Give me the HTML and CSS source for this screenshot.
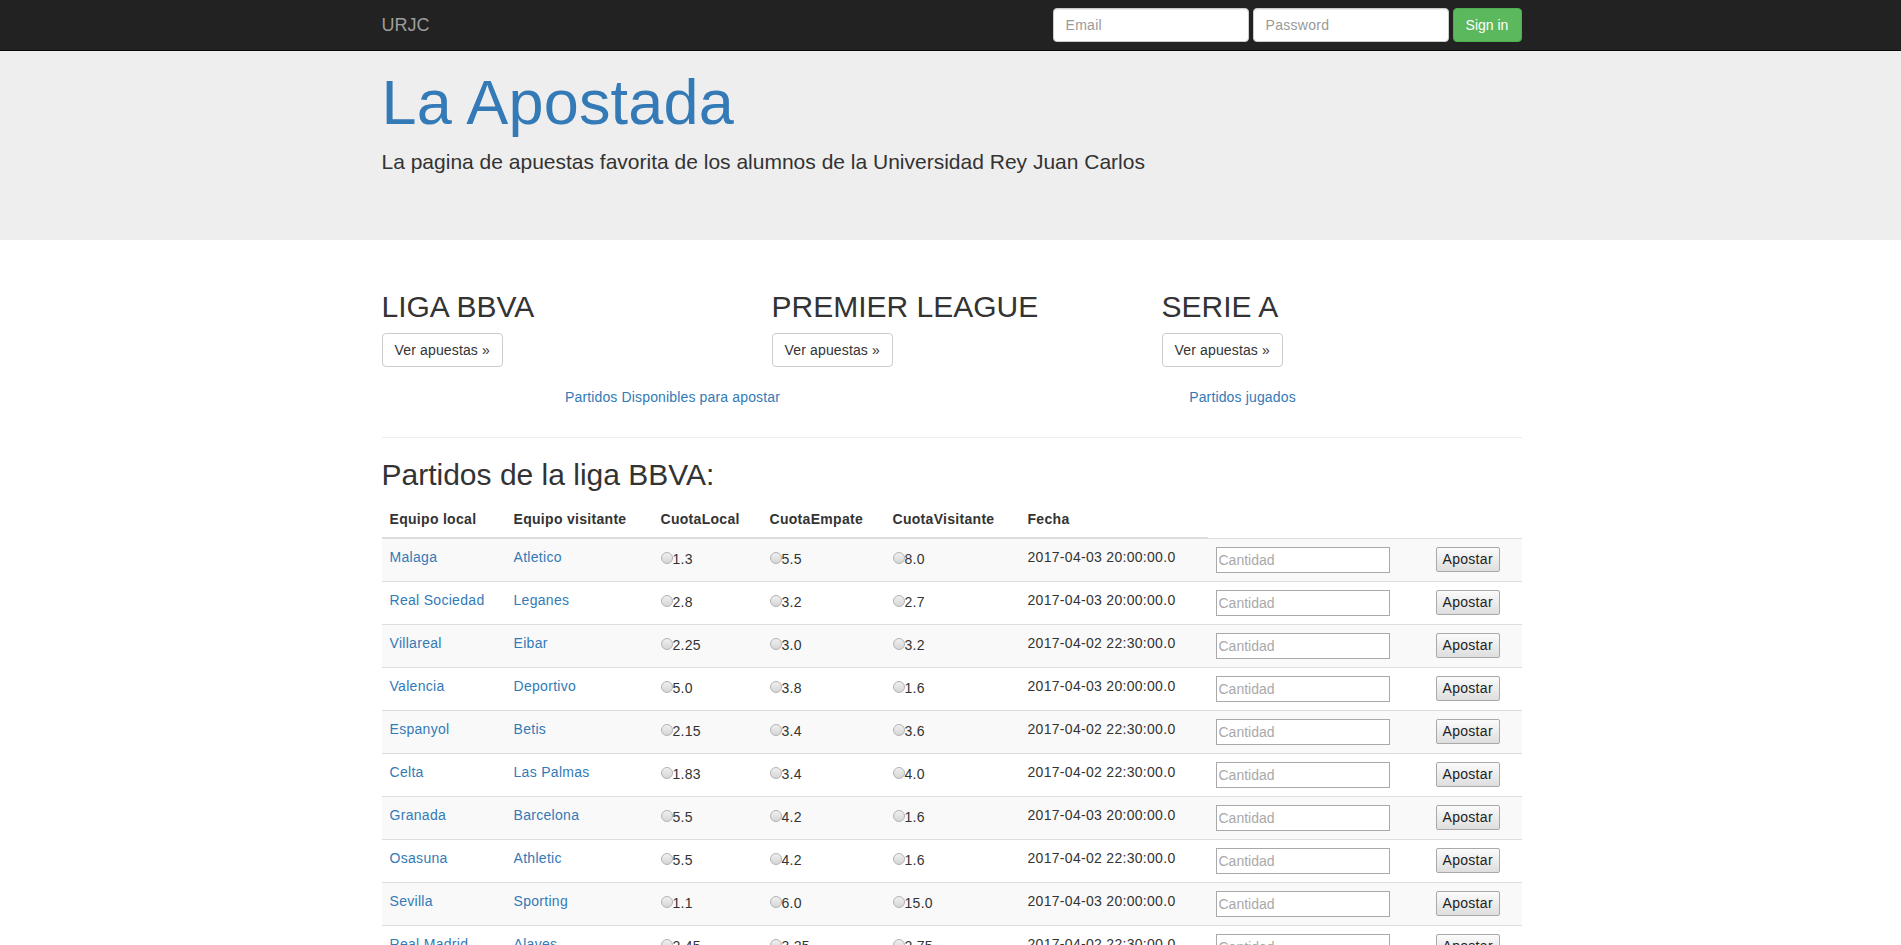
FILE: index.html
```html
<!DOCTYPE html>
<html lang="es">
<head>
<meta charset="utf-8">
<title>La Apostada</title>
<link rel="stylesheet" href="styles.css">
</head>
<body>
<nav class="navbar">
  <div class="container navbar-inner">
    <a class="brand" href="#">URJC</a>
    <form class="navbar-form">
      <input class="form-control" type="text" placeholder="Email">
      <input class="form-control" type="password" placeholder="Password">
      <button class="btn btn-success" type="button">Sign in</button>
    </form>
  </div>
</nav>

<div class="jumbotron">
  <div class="container">
    <h1>La Apostada</h1>
    <p>La pagina de apuestas favorita de los alumnos de la Universidad Rey Juan Carlos</p>
  </div>
</div>

<div class="container">
  <div class="leagues">
    <div class="league">
      <h2>LIGA BBVA</h2>
      <p><a class="btn btn-default" href="#">Ver apuestas &raquo;</a></p>
    </div>
    <div class="league">
      <h2>PREMIER LEAGUE</h2>
      <p><a class="btn btn-default" href="#">Ver apuestas &raquo;</a></p>
    </div>
    <div class="league">
      <h2>SERIE A</h2>
      <p><a class="btn btn-default" href="#">Ver apuestas &raquo;</a></p>
    </div>
  </div>

  <ul class="subnav">
    <li><a href="#">Partidos Disponibles para apostar</a></li>
    <li><a href="#">Partidos jugados</a></li>
  </ul>

  <hr>

  <h2 class="section-title">Partidos de la liga BBVA:</h2>

  <table class="table">
    <colgroup>
      <col class="c1"><col class="c2"><col class="c3"><col class="c4">
      <col class="c5"><col class="c6"><col class="c7"><col class="c8">
    </colgroup>
    <thead>
      <tr>
        <th>Equipo local</th>
        <th>Equipo visitante</th>
        <th>CuotaLocal</th>
        <th>CuotaEmpate</th>
        <th>CuotaVisitante</th>
        <th>Fecha</th>
      </tr>
    </thead>
    <tbody>
      <tr>
        <td><a href="#">Malaga</a></td><td><a href="#">Atletico</a></td>
        <td><input class="odd" type="radio" name="m1">1.3</td>
        <td><input class="odd" type="radio" name="m1">5.5</td>
        <td><input class="odd" type="radio" name="m1">8.0</td>
        <td>2017-04-03 20:00:00.0</td>
        <td><input class="amount" type="text" placeholder="Cantidad"></td>
        <td><button class="bet" type="button">Apostar</button></td>
      </tr>
      <tr>
        <td><a href="#">Real Sociedad</a></td><td><a href="#">Leganes</a></td>
        <td><input class="odd" type="radio" name="m2">2.8</td>
        <td><input class="odd" type="radio" name="m2">3.2</td>
        <td><input class="odd" type="radio" name="m2">2.7</td>
        <td>2017-04-03 20:00:00.0</td>
        <td><input class="amount" type="text" placeholder="Cantidad"></td>
        <td><button class="bet" type="button">Apostar</button></td>
      </tr>
      <tr>
        <td><a href="#">Villareal</a></td><td><a href="#">Eibar</a></td>
        <td><input class="odd" type="radio" name="m3">2.25</td>
        <td><input class="odd" type="radio" name="m3">3.0</td>
        <td><input class="odd" type="radio" name="m3">3.2</td>
        <td>2017-04-02 22:30:00.0</td>
        <td><input class="amount" type="text" placeholder="Cantidad"></td>
        <td><button class="bet" type="button">Apostar</button></td>
      </tr>
      <tr>
        <td><a href="#">Valencia</a></td><td><a href="#">Deportivo</a></td>
        <td><input class="odd" type="radio" name="m4">5.0</td>
        <td><input class="odd" type="radio" name="m4">3.8</td>
        <td><input class="odd" type="radio" name="m4">1.6</td>
        <td>2017-04-03 20:00:00.0</td>
        <td><input class="amount" type="text" placeholder="Cantidad"></td>
        <td><button class="bet" type="button">Apostar</button></td>
      </tr>
      <tr>
        <td><a href="#">Espanyol</a></td><td><a href="#">Betis</a></td>
        <td><input class="odd" type="radio" name="m5">2.15</td>
        <td><input class="odd" type="radio" name="m5">3.4</td>
        <td><input class="odd" type="radio" name="m5">3.6</td>
        <td>2017-04-02 22:30:00.0</td>
        <td><input class="amount" type="text" placeholder="Cantidad"></td>
        <td><button class="bet" type="button">Apostar</button></td>
      </tr>
      <tr>
        <td><a href="#">Celta</a></td><td><a href="#">Las Palmas</a></td>
        <td><input class="odd" type="radio" name="m6">1.83</td>
        <td><input class="odd" type="radio" name="m6">3.4</td>
        <td><input class="odd" type="radio" name="m6">4.0</td>
        <td>2017-04-02 22:30:00.0</td>
        <td><input class="amount" type="text" placeholder="Cantidad"></td>
        <td><button class="bet" type="button">Apostar</button></td>
      </tr>
      <tr>
        <td><a href="#">Granada</a></td><td><a href="#">Barcelona</a></td>
        <td><input class="odd" type="radio" name="m7">5.5</td>
        <td><input class="odd" type="radio" name="m7">4.2</td>
        <td><input class="odd" type="radio" name="m7">1.6</td>
        <td>2017-04-03 20:00:00.0</td>
        <td><input class="amount" type="text" placeholder="Cantidad"></td>
        <td><button class="bet" type="button">Apostar</button></td>
      </tr>
      <tr>
        <td><a href="#">Osasuna</a></td><td><a href="#">Athletic</a></td>
        <td><input class="odd" type="radio" name="m8">5.5</td>
        <td><input class="odd" type="radio" name="m8">4.2</td>
        <td><input class="odd" type="radio" name="m8">1.6</td>
        <td>2017-04-02 22:30:00.0</td>
        <td><input class="amount" type="text" placeholder="Cantidad"></td>
        <td><button class="bet" type="button">Apostar</button></td>
      </tr>
      <tr>
        <td><a href="#">Sevilla</a></td><td><a href="#">Sporting</a></td>
        <td><input class="odd" type="radio" name="m9">1.1</td>
        <td><input class="odd" type="radio" name="m9">6.0</td>
        <td><input class="odd" type="radio" name="m9">15.0</td>
        <td>2017-04-03 20:00:00.0</td>
        <td><input class="amount" type="text" placeholder="Cantidad"></td>
        <td><button class="bet" type="button">Apostar</button></td>
      </tr>
      <tr>
        <td><a href="#">Real Madrid</a></td><td><a href="#">Alaves</a></td>
        <td><input class="odd" type="radio" name="m10">2.45</td>
        <td><input class="odd" type="radio" name="m10">3.25</td>
        <td><input class="odd" type="radio" name="m10">2.75</td>
        <td>2017-04-02 22:30:00.0</td>
        <td><input class="amount" type="text" placeholder="Cantidad"></td>
        <td><button class="bet" type="button">Apostar</button></td>
      </tr>
    </tbody>
  </table>
</div>
</body>
</html>
```

FILE: styles.css
```css
* { box-sizing: border-box; }

html, body {
  margin: 0;
  padding: 0;
}

body {
  font-family: "Liberation Sans", Arial, Helvetica, sans-serif;
  font-size: 14px;
  line-height: 1.42857143;
  color: #333;
  background: #fff;
}

a { color: #337ab7; text-decoration: none; }

.container {
  width: 1170px;
  margin: 0 0 0 calc(50% - 584px);
  padding: 0 15px;
}

/* Navbar */
.navbar {
  background: #222;
  border-bottom: 1px solid #080808;
  height: 51px;
}
.navbar-inner {
  display: flex;
  justify-content: space-between;
  align-items: flex-start;
  height: 50px;
}
.brand {
  display: block;
  height: 50px;
  padding: 15px 0;
  font-size: 18px;
  line-height: 20px;
  color: #9d9d9d;
}
.navbar-form {
  display: flex;
  gap: 4px;
  margin: 8px 0 0;
}
.form-control {
  width: 196px;
  height: 34px;
  padding: 6px 12px;
  font-family: inherit;
  font-size: 14px;
  line-height: 20px;
  color: #555;
  background: #fff;
  border: 1px solid #ccc;
  border-radius: 4px;
  box-shadow: inset 0 1px 1px rgba(0,0,0,.075);
}
.form-control::placeholder { color: #999; letter-spacing: 0.3px; }

.btn {
  display: inline-block;
  padding: 6px 12px;
  font-family: inherit;
  font-size: 14px;
  line-height: 20px;
  letter-spacing: 0.15px;
  border: 1px solid transparent;
  border-radius: 4px;
  white-space: nowrap;
  cursor: pointer;
}
.btn-success {
  color: #fff;
  background: #5cb85c;
  border-color: #4cae4c;
  height: 34px;
  width: 69px;
  padding: 6px 0;
  letter-spacing: 0;
  text-align: center;
}
.btn-default {
  color: #333;
  background: #fff;
  border-color: #ccc;
}

/* Jumbotron */
.jumbotron {
  display: flow-root;
  background: #eee;
  margin-bottom: 30px;
  padding-bottom: 48px;
}
.jumbotron h1 {
  margin: 17px 0 10px;
  font-size: 63px;
  font-weight: 500;
  line-height: 1.1;
  color: #337ab7;
  letter-spacing: 0.2px;
}
.jumbotron p {
  margin: 0 0 15px;
  font-size: 21px;
  line-height: 30px;
  font-weight: 300;
}

/* Leagues */
.leagues {
  display: grid;
  grid-template-columns: repeat(3, 1fr);
  column-gap: 30px;
}
.league h2 {
  margin: 20px 0 10px;
  font-size: 30px;
  font-weight: 500;
  line-height: 1.1;
}
.league p { margin: 0 0 10px; }

.subnav {
  list-style: none;
  margin: 0;
  padding: 0;
  display: grid;
  grid-template-columns: 1fr 1fr;
  text-align: center;
  letter-spacing: 0.15px;
}
.subnav li { padding-left: 12px; }
.subnav li a {
  display: inline-block;
  padding: 10px 15px;
  line-height: 20px;
}

hr {
  margin: 20px 0;
  border: 0;
  border-top: 1px solid #eee;
  height: 0;
}

.section-title {
  margin: 20px 0 10px;
  font-size: 30px;
  font-weight: 500;
  line-height: 1.1;
}

/* Table */
.table {
  width: 1140px;
  table-layout: fixed;
  border-collapse: collapse;
  border-spacing: 0;
  margin-bottom: 20px;
  letter-spacing: 0.3px;
}
.c1 { width: 124px; }
.c2 { width: 147px; }
.c3 { width: 109px; }
.c4 { width: 123px; }
.c5 { width: 135px; }
.c6 { width: 188px; }
.c7 { width: 220px; }
.c8 { width: 94px; }

.table th {
  text-align: left;
  font-weight: bold;
  padding: 8px;
  line-height: 20px;
  vertical-align: bottom;
  border-bottom: 2px solid #ddd;
}
.table td {
  padding: 8px;
  line-height: 20px;
  vertical-align: top;
  border-top: 1px solid #ddd;
  white-space: nowrap;
}
.table tbody tr:nth-child(odd) { background: #f9f9f9; }

.odd {
  -webkit-appearance: none;
  appearance: none;
  display: inline-block;
  width: 12px;
  height: 12px;
  margin: 5px 0 0;
  padding: 0;
  border: 1px solid #b4b4b4;
  border-radius: 50%;
  background: linear-gradient(#f0f0f0, #d6d6d6);
  vertical-align: baseline;
}

.amount {
  display: block;
  width: 174px;
  height: 26px;
  padding: 1px 2px;
  font-family: inherit;
  font-size: 14px;
  line-height: 20px;
  border: 1px solid #a9a9a9;
  border-radius: 0;
  background: #fff;
  color: #333;
}
.amount::placeholder { color: #a9a9a9; }

.bet {
  display: block;
  height: 25px;
  padding: 1px 6px;
  font-family: inherit;
  font-size: 14px;
  line-height: 20px;
  letter-spacing: 0.3px;
  color: #222;
  border: 1px solid #a9a9a9;
  border-radius: 2px;
  background: linear-gradient(#fbfbfb, #dedede);
}
```
